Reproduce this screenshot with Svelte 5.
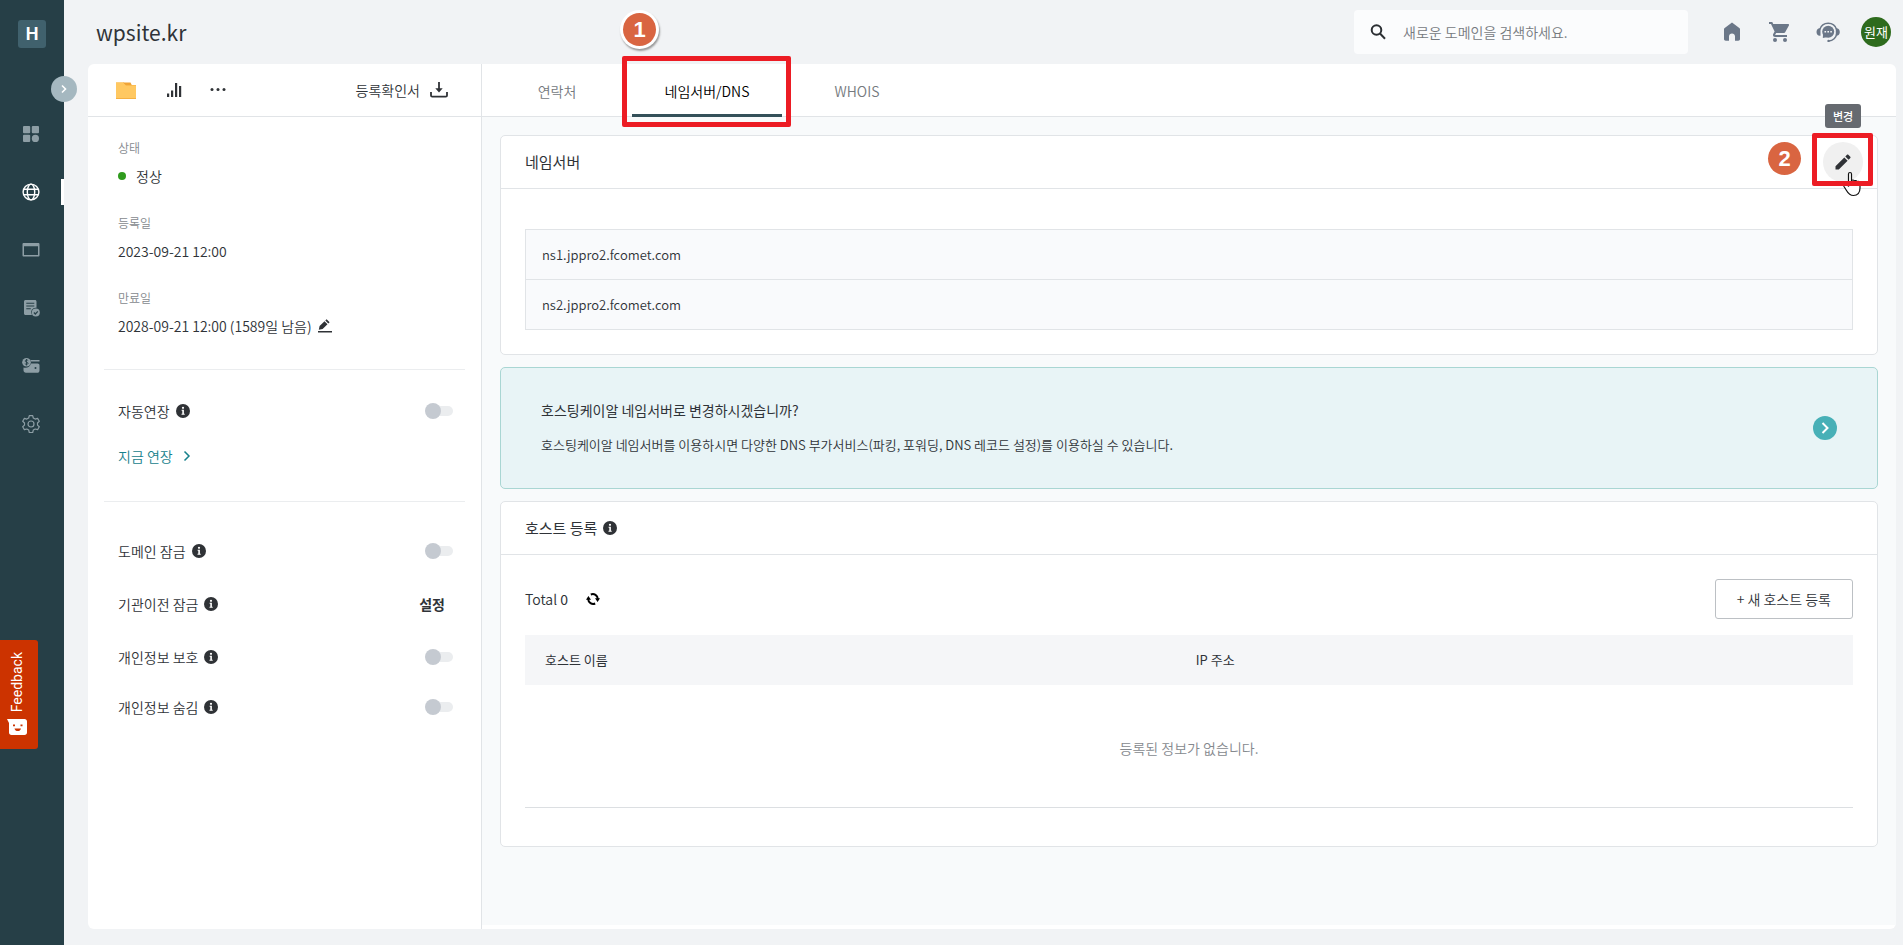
<script lang="ts">
  interface Option {
    id: string;
    label: string;
    /** true면 토글 대신 설정 버튼 표시 */
    setting?: boolean;
  }

  /** 사이드바 메뉴 */
  const menus = [
    { id: 'dashboard', label: '대시보드' },
    { id: 'domain', label: '도메인' },
    { id: 'hosting', label: '호스팅' },
    { id: 'ssl', label: '인증서' },
    { id: 'billing', label: '결제' },
    { id: 'settings', label: '환경설정' }
  ];

  const tabs = ['연락처', '네임서버/DNS', 'WHOIS'];

  const options: Option[] = [
    { id: 'lock', label: '도메인 잠금' },
    { id: 'transfer', label: '기관이전 잠금', setting: true },
    { id: 'privacy', label: '개인정보 보호' },
    { id: 'hide', label: '개인정보 숨김' }
  ];

  const nameservers = ['ns1.jppro2.fcomet.com', 'ns2.jppro2.fcomet.com'];

  let activeMenu = $state('domain');
  let activeTab = $state('네임서버/DNS');
  let keyword = $state('');
</script>

{#snippet info()}
  <svg class="info" viewBox="0 0 14 14" aria-hidden="true">
    <circle cx="7" cy="7" r="7" fill="#2f3236" />
    <circle cx="7" cy="3.8" r="1.1" fill="#fff" />
    <path d="M5.6 5.8h2.3v4h.8v1H5.5v-1h.8V6.8h-.7z" fill="#fff" />
  </svg>
{/snippet}

{#snippet menuIcon(id: string)}
  <svg width="20" height="20" viewBox="0 0 20 20" fill="currentColor" aria-hidden="true">
    {#if id === 'dashboard'}
      <rect x="2" y="2" width="7.2" height="7.2" rx="1" />
      <rect x="10.8" y="2" width="7.2" height="7.2" rx="1" />
      <rect x="2" y="10.8" width="7.2" height="7.2" rx="1" />
      <circle cx="14.4" cy="14.4" r="3.6" />
    {:else if id === 'domain'}
      <g fill="none" stroke="currentColor" stroke-width="1.4">
        <circle cx="10" cy="10" r="7.9" />
        <ellipse cx="10" cy="10" rx="3.7" ry="7.9" />
        <path d="M2.7 7.2h14.6M2.7 12.8h14.6" />
      </g>
    {:else if id === 'hosting'}
      <path d="M2.6 3h14.8c.6 0 1.1.5 1.1 1.1v11.3c0 .6-.5 1.1-1.1 1.1H2.6c-.6 0-1.1-.5-1.1-1.1V4.1C1.5 3.5 2 3 2.600 3zM3 6.200V15h14V6.200z" fill-rule="evenodd" />
    {:else if id === 'ssl'}
      <path d="M4.5 2H14c.8 0 1.5.7 1.5 1.5v6.200a4.700 4.700 0 0 0-4.600 7.300H4.500C3.700 17 3 16.300 3 15.500v-12C3 2.700 3.700 2 4.500 2z" />
      <path d="M5.300 5.300h8M5.300 8h8M5.300 10.700h4.500" stroke="#263f47" stroke-width="1.1" />
      <circle cx="14.8" cy="14.5" r="4" />
      <path d="M12.900 14.500l1.400 1.500 2.500-2.700" fill="none" stroke="#263f47" stroke-width="1.2" />
    {:else if id === 'billing'}
      <path d="M9.500 5.500h9V4h-9zM2.500 11.500c3.500.8 6.500-.6 7.500-4h6.700c1 0 1.800.8 1.800 1.800v5.200c0 1.400-1 2.300-2.300 2.300H5c-1.500 0-2.500-1-2.500-2.500z" />
      <circle cx="5.5" cy="6.2" r="4.3" />
      <path d="M7.200 4.600c-.8-1-3.200-.8-3.100.5.1 1.400 3 .7 3 2.100 0 1.400-2.400 1.500-3.300.4M5.500 3v6.500" fill="none" stroke="#263f47" stroke-width=".9" />
      <circle cx="14.5" cy="12" r="1" fill="#263f47" />
    {:else}
      <g fill="none" stroke="currentColor" stroke-width="1.2" stroke-linejoin="round">
        <circle cx="10" cy="10" r="3" />
        <path d="M8.300 1.600h3.400l.6 2.400 1.900 1.100 2.400-.7 1.700 2.900-1.800 1.700v2.100l1.800 1.700-1.700 2.900-2.400-.7-1.900 1.100-.6 2.400H8.300l-.6-2.400-1.900-1.100-2.400.7-1.700-2.900 1.800-1.700V9L1.700 7.300l1.700-2.900 2.400.7L7.700 4z" />
      </g>
    {/if}
  </svg>
{/snippet}

<div class="app">
  <aside class="sidebar">
    <a class="logo" href="#home" aria-label="홈">H</a>
    <button class="expand" aria-label="메뉴 펼치기">
      <svg width="12" height="12" viewBox="0 0 12 12" fill="none" stroke="#fff" stroke-width="1.6">
        <path d="M4 2.500L7.500 6 4 9.500" />
      </svg>
    </button>
    <nav class="menu">
      {#each menus as menu}
        <button
          class="menu-item"
          class:active={activeMenu === menu.id}
          aria-label={menu.label}
          onclick={() => (activeMenu = menu.id)}
        >
          {@render menuIcon(menu.id)}
        </button>
      {/each}
    </nav>
  </aside>

  <button class="feedback">
    <span>Feedback</span>
    <svg width="20" height="16" viewBox="0 0 20 16" aria-hidden="true">
      <path d="M0 0h17.500C19 0 20 1 20 2.500v11c0 1.500-1 2.500-2.500 2.500h-13C3 16 2 15 2 13.500V4z" fill="#fff" />
      <path d="M6 5.500h2v1.700H6zM13.500 5.500h2v1.700h-2zM7.500 9.500h6.500c-.5 3.400-6 3.400-6.500 0z" fill="#cc3300" />
    </svg>
  </button>

  <main class="main">
    <header class="header">
      <h1>wpsite.kr</h1>
      <div class="header-tools">
        <label class="search">
          <svg width="18" height="18" viewBox="0 0 18 18" fill="none" stroke="#2b2f33" stroke-width="2" aria-hidden="true">
            <circle cx="6.5" cy="7" r="4.8" />
            <path d="M10 10.500l5 5.200" />
          </svg>
          <input type="text" aria-label="도메인 검색" placeholder="새로운 도메인을 검색하세요." bind:value={keyword} />
        </label>
        <button class="tool" aria-label="홈">
          <svg width="24" height="24" viewBox="0 0 24 24" fill="currentColor">
            <path d="M12 2.500l7.300 5.400c.5.400.7.800.7 1.400v9.700c0 1-.8 1.700-1.700 1.700H15v-4.400c0-1.600-1.300-2.800-3-2.800s-3 1.200-3 2.800v4.400H5.700C4.800 20.700 4 20 4 19V9.300c0-.6.200-1 .7-1.400z" />
          </svg>
        </button>
        <button class="tool" aria-label="장바구니">
          <svg width="24" height="24" viewBox="0 0 24 24" fill="currentColor">
            <path d="M2 2v2h2l3.600 7.600-1.400 2.500c-.7 1.300.3 2.900 1.800 2.900h12v-2H8.400c-.1 0-.2-.1-.2-.3l.9-1.700h7.500c.7 0 1.400-.4 1.700-1l3.600-6.500c.4-.7-.1-1.500-.9-1.500H6.200L5.300 2z" />
            <circle cx="8" cy="20" r="2" />
            <circle cx="18" cy="20" r="2" />
          </svg>
        </button>
        <button class="tool" aria-label="고객지원">
          <svg width="24" height="24" viewBox="-2 0 24 24" overflow="visible" fill="currentColor">
            <path d="M3.800 9.500a8.800 8.800 0 0 1 16.800 0M20.800 13.500a8.800 8.800 0 0 1-8 7.600" fill="none" stroke="currentColor" stroke-width="1.5" />
            <path d="M4.500 8.200v7.600C2.200 16.200.5 14.600.5 12s1.700-4.200 4-3.800zM19.800 8.200v7.600c2.300.4 4-1.200 4-3.800s-1.700-4.200-4-3.800z" />
            <circle cx="12.2" cy="11.8" r="6" />
            <path d="M6.800 18l.3-5 4.500 4z" />
            <path d="M8.500 11h1.600v1.600H8.500zM11.400 11H13v1.600h-1.600zM14.300 11h1.600v1.600h-1.600z" fill="#f1f3f5" />
            <circle cx="12.5" cy="20.9" r="1.2" />
          </svg>
        </button>
        <button class="avatar">원재</button>
      </div>
    </header>

    <div class="panel">
      <section class="detail">
        <div class="toolbar">
          <button aria-label="폴더">
            <svg width="20" height="20" viewBox="0 0 20 20">
              <path d="M0 2.500h8l1.500 2.500H20v14H0z" fill="#f5b042" />
              <path d="M7 2.500h7.500L16 5.500H9z" fill="#f0a437" />
              <path d="M0 2.500h7l3 3h10V18H0z" fill="#ffc861" />
            </svg>
          </button>
          <button aria-label="통계">
            <svg width="20" height="20" viewBox="0 0 20 20" fill="#2f3236">
              <path d="M5 13.500h2.200V17H5zM9 10.500h2.200V17H9zM13 3h2.200v14H13zM17 6h2.200v11H17z" />
            </svg>
          </button>
          <button aria-label="더보기">
            <svg width="20" height="20" viewBox="0 0 20 20" fill="#2f3236">
              <circle cx="4" cy="9.5" r="1.5" /><circle cx="10" cy="9.5" r="1.5" /><circle cx="16" cy="9.5" r="1.5" />
            </svg>
          </button>
          <button class="download">
            등록확인서
            <svg width="18" height="18" viewBox="0 0 18 18" fill="none" stroke="#2f3236" stroke-width="1.8" aria-hidden="true">
              <path d="M1 11v3.500c0 .8.500 1.200 1.200 1.200h13.600c.7 0 1.200-.4 1.200-1.200V11" />
              <path d="M9 1v8" />
              <path d="M5.300 7.200h7.400L9 11.500z" fill="#2f3236" stroke="none" />
            </svg>
          </button>
        </div>

        <div class="detail-body">
          <dl class="summary">
            <dt>상태</dt>
            <dd class="status">정상</dd>
            <dt>등록일</dt>
            <dd>2023-09-21 12:00</dd>
            <dt>만료일</dt>
            <dd>
              2028-09-21 12:00 (1589일 남음)
              <button aria-label="만료일 변경">
                <svg width="14" height="14" viewBox="0 0 14 14" fill="#2f3236">
                  <path d="M0 12h14v1.600H0zM.8 10.800l.8-3.700 4.900-4.900 3 3-4.900 4.900zM7.300 1.500L8.600.2l3 3-1.300 1.300z" />
                </svg>
              </button>
            </dd>
          </dl>

          <div class="renew">
            <div class="row">
              <label for="auto-renew">자동연장 {@render info()}</label>
              <input id="auto-renew" class="toggle" type="checkbox" />
            </div>
            <a class="row renew-link" href="#renew">
              지금 연장
              <svg width="8" height="12" viewBox="0 0 8 12" fill="none" stroke="currentColor" stroke-width="1.5" aria-hidden="true">
                <path d="M1.500 1.500L6 6l-4.500 4.500" />
              </svg>
            </a>
          </div>

          <div class="options">
            {#each options as option}
              {#if option.setting}
                <div class="row row-setting">
                  <span class="row-label">{option.label} {@render info()}</span>
                  <button class="setting">설정</button>
                </div>
              {:else}
                <div class="row">
                  <label for={option.id}>{option.label} {@render info()}</label>
                  <input id={option.id} class="toggle" type="checkbox" />
                </div>
              {/if}
            {/each}
          </div>
        </div>
      </section>

      <section class="content">
        <div class="tabs" role="tablist">
          {#each tabs as tab}
            <button
              class="tab"
              class:active={activeTab === tab}
              role="tab"
              aria-selected={activeTab === tab}
              onclick={() => (activeTab = tab)}
            >
              {tab}
              {#if tab === '네임서버/DNS'}
                <span class="mark mark-tab"></span>
                <span class="step step-tab">1</span>
              {/if}
            </button>
          {/each}
        </div>

        <div class="cards">
          <article class="card">
            <div class="card-head">
              <h2>네임서버</h2>
              <div class="edit-wrap">
                <span class="tooltip" role="tooltip">변경</span>
                <button class="edit" aria-label="네임서버 변경">
                  <svg width="20" height="20" viewBox="0 0 20 20" fill="#2f3236">
                    <path d="M2.500 17.500v-3.300l8.800-8.800 3.300 3.300-8.800 8.800zM12.300 4.400l1.700-1.700c.4-.4.900-.4 1.300 0l2 2c.4.400.4.900 0 1.300l-1.700 1.700z" />
                  </svg>
                </button>
                <svg class="cursor" width="19" height="26" viewBox="0 0 19 26" aria-hidden="true">
                  <path
                    d="M5.500 15V3c0-2 3-2 3 0v7c.3-1.500 2.800-1.300 2.900.4.500-1.300 2.700-1 2.800.6.700-1 2.800-.6 2.800 1.200V17c0 5-2.500 7.500-6.500 7.500-3.500 0-5-1.500-7-5L1 15.500c-.8-1.800 1-2.800 2.300-1.700z"
                    fill="#fff" stroke="#111" stroke-width="1.2"
                  />
                  <path d="M8.500 10v4M11.400 10.500V14M14.200 11.500V14" fill="none" stroke="#111" />
                </svg>
                <span class="mark mark-edit"></span>
                <span class="step step-edit">2</span>
              </div>
            </div>
            <ul class="nameservers">
              {#each nameservers as ns}
                <li>{ns}</li>
              {/each}
            </ul>
          </article>

          <a class="banner" href="#change">
            <span class="banner-text">
              <strong>호스팅케이알 네임서버로 변경하시겠습니까?</strong>
              <span>호스팅케이알 네임서버를 이용하시면 다양한 DNS 부가서비스(파킹, 포워딩, DNS 레코드 설정)를 이용하실 수 있습니다.</span>
            </span>
            <svg width="24" height="24" viewBox="0 0 24 24" aria-hidden="true">
              <circle cx="12" cy="12" r="12" fill="#48b0b7" />
              <path d="M9.500 7l5 5-5 5" fill="none" stroke="#fff" stroke-width="2" />
            </svg>
          </a>

          <article class="card">
            <div class="card-head">
              <h2>호스트 등록 {@render info()}</h2>
            </div>
            <div class="hosts">
              <div class="hosts-bar">
                <span class="total">Total <b>0</b></span>
                <button class="refresh" aria-label="새로고침">
                  <svg width="14" height="14" viewBox="0 0 14 14" fill="none" stroke="#000" stroke-width="2">
                    <path d="M4.800 2.500A5 5 0 0 1 11.800 7M9.200 11.500A5 5 0 0 1 2.200 7" />
                    <path d="M9 6.300h5L11.600 10zM0 7.700h5L2.400 4z" fill="#000" stroke="none" />
                  </svg>
                </button>
                <button class="add">+ 새 호스트 등록</button>
              </div>
              <table>
                <thead>
                  <tr><th class="col-host">호스트 이름</th><th>IP 주소</th></tr>
                </thead>
                <tbody>
                  <tr><td colspan="2">등록된 정보가 없습니다.</td></tr>
                </tbody>
              </table>
            </div>
          </article>
        </div>
      </section>
    </div>
  </main>
</div>

<style>
  :global(body) {
    background: #f1f3f5;
  }

  .app,
  .app * {
    box-sizing: border-box;
  }

  .app {
    --line: #e1e4e7;
    --text: #2f3338;
    display: flex;
    min-height: 100vh;
    font-family: 'Noto Sans CJK KR', 'Noto Sans', sans-serif;
    font-size: 14px;
    font-weight: 350;
    line-height: 20px;
    color: var(--text);
  }

  button {
    padding: 0;
    border: none;
    background: none;
    font: inherit;
    color: inherit;
    cursor: pointer;
  }

  a {
    color: inherit;
    text-decoration: none;
  }

  h1,
  h2,
  dl,
  dd,
  ul {
    margin: 0;
    padding: 0;
  }

  h1,
  h2 {
    font-weight: 400;
  }

  svg {
    display: block;
    flex: none;
  }

  /* 사이드바 */
  .sidebar {
    position: relative;
    display: flex;
    flex: none;
    flex-direction: column;
    gap: 73px;
    width: 64px;
    padding-top: 20px;
    background: #263f47;
  }

  .logo {
    display: flex;
    align-items: center;
    justify-content: center;
    width: 28px;
    height: 28px;
    margin-left: 18px;
    border-radius: 3px;
    background: #40616d;
    color: #fff;
    font-family: Inter, sans-serif;
    font-size: 17px;
    font-weight: 700;
  }

  .expand {
    position: absolute;
    top: 76px;
    right: -13px;
    display: flex;
    align-items: center;
    justify-content: center;
    width: 26px;
    height: 26px;
    border-radius: 50%;
    background: #a5b8c0;
  }

  .menu {
    display: flex;
    flex-direction: column;
    gap: 32px;
  }

  .menu-item {
    display: flex;
    align-items: center;
    height: 26px;
    padding-left: 21px;
    border-right: 3px solid transparent;
    color: #8d9ea5;
  }

  .menu-item.active {
    border-right-color: #fff;
    color: #fff;
  }

  .feedback {
    position: fixed;
    top: 640px;
    left: 0;
    display: flex;
    flex-direction: column;
    align-items: center;
    justify-content: space-between;
    width: 38px;
    height: 109px;
    padding: 12px 11px 14px 7px;
    border-radius: 0 3px 3px 0;
    background: #cc3300;
    color: #fff;
    font-family: Roboto, sans-serif;
    font-weight: 400;
  }

  .feedback span {
    writing-mode: vertical-rl;
    transform: rotate(180deg);
  }

  /* 헤더 */
  .main {
    display: flex;
    flex: 1;
    flex-direction: column;
    min-width: 0;
    padding: 0 7px 16px 24px;
  }

  .header {
    display: flex;
    align-items: center;
    justify-content: space-between;
    height: 64px;
    padding: 0 5px 0 8px;
  }

  h1 {
    font-size: 21px;
    line-height: 32px;
  }

  .header-tools {
    display: flex;
    align-items: center;
    gap: 23px;
  }

  .search {
    display: flex;
    align-items: center;
    gap: 15px;
    width: 334px;
    height: 44px;
    margin-right: 9px;
    padding: 0 16px;
    border-radius: 4px;
    background: #fbfcfd;
  }

  .search input {
    flex: 1;
    min-width: 0;
    padding: 0;
    border: none;
    outline: none;
    background: none;
    font: inherit;
  }

  .search input::placeholder {
    color: #75797e;
  }

  .tool {
    color: #6b7788;
  }

  .tool svg {
    overflow: visible;
  }

  .avatar {
    width: 30px;
    height: 30px;
    border-radius: 50%;
    background: #2e6b1d;
    color: #fff;
    font-size: 13px;
    font-weight: 400;
  }

  /* 도메인 상세 */
  .panel {
    display: grid;
    flex: 1;
    grid-template-columns: 394px 1fr;
    border-radius: 6px;
    background: #fff;
  }

  .detail {
    border-right: 1px solid var(--line);
  }

  .toolbar {
    display: flex;
    align-items: center;
    gap: 26px;
    height: 53px;
    padding: 0 33px 0 28px;
    border-bottom: 1px solid var(--line);
  }

  .download {
    display: flex;
    align-items: center;
    gap: 10px;
    margin-left: auto;
  }

  .detail-body {
    padding: 0 16px;
  }

  .summary,
  .renew,
  .options {
    padding: 0 12px 0 14px;
  }

  .summary {
    padding-top: 22px;
    padding-bottom: 33px;
  }

  dt {
    margin-bottom: 9px;
    font-size: 12px;
    line-height: 18px;
    color: #85898e;
  }

  dd {
    display: flex;
    align-items: center;
    gap: 6px;
  }

  dd:not(:last-child) {
    margin-bottom: 28px;
  }

  .status::before {
    width: 8px;
    height: 8px;
    margin-right: 4px;
    border-radius: 50%;
    background: #2f9b1d;
    content: '';
  }

  .renew,
  .options {
    display: flex;
    flex-direction: column;
    border-top: 1px solid #ebedef;
  }

  .renew {
    gap: 11px;
    padding-top: 24px;
    padding-bottom: 28px;
  }

  .options {
    gap: 16px;
    padding-top: 32px;
  }

  .row {
    display: flex;
    align-items: center;
    justify-content: space-between;
    min-height: 34px;
  }

  .row-setting {
    min-height: 40px;
  }

  .row label,
  .row-label,
  h2 {
    display: flex;
    align-items: center;
    gap: 6px;
  }

  .info {
    width: 14px;
    height: 14px;
  }

  .renew-link {
    justify-content: flex-start;
    gap: 10px;
    color: #17818c;
  }

  .setting {
    padding: 0 8px;
    font-weight: 700;
  }

  .toggle {
    position: relative;
    width: 28px;
    height: 16px;
    margin: 0;
    appearance: none;
    cursor: pointer;
  }

  .toggle::before,
  .toggle::after {
    position: absolute;
    content: '';
  }

  .toggle::before {
    inset: 3px 0 3px 8px;
    border-radius: 5px;
    background: #ebedef;
  }

  .toggle::after {
    top: 0;
    left: 0;
    width: 16px;
    height: 16px;
    border-radius: 50%;
    background: #c5cad1;
  }

  .toggle:checked::after {
    left: 12px;
    background: #48b0b7;
  }

  /* 탭 */
  .content {
    display: flex;
    flex-direction: column;
    min-width: 0;
    padding-bottom: 4px;
  }

  .tabs {
    display: flex;
    height: 53px;
    border-bottom: 1px solid var(--line);
  }

  .tab {
    position: relative;
    width: 150px;
    height: 53px;
    border-top: 3px solid transparent;
    border-bottom: 3px solid transparent;
    color: #75797e;
  }

  .tab.active {
    border-bottom-color: #345059;
    color: #000;
  }

  .cards {
    display: flex;
    flex: 1;
    flex-direction: column;
    gap: 12px;
    padding: 18px;
    background: #f8fafb;
  }

  .card {
    border: 1px solid var(--line);
    border-radius: 5px;
    background: #fff;
  }

  .card-head {
    display: flex;
    align-items: center;
    justify-content: space-between;
    height: 53px;
    padding: 0 14px 0 24px;
    border-bottom: 1px solid var(--line);
  }

  h2 {
    font-size: 15px;
  }

  .edit-wrap {
    position: relative;
  }

  .edit {
    display: flex;
    align-items: center;
    justify-content: center;
    width: 40px;
    height: 40px;
    border-radius: 50%;
    background: #f0f0f0;
  }

  .tooltip {
    position: absolute;
    bottom: 54px;
    left: 2px;
    width: 36px;
    border-radius: 3px;
    background: #666a70;
    color: #fff;
    font-size: 11px;
    font-weight: 500;
    line-height: 24px;
    text-align: center;
  }

  .cursor {
    position: absolute;
    top: 29px;
    left: 20px;
    pointer-events: none;
  }

  /* 안내 표시 */
  .mark {
    position: absolute;
    border: 5px solid #ec1c24;
    border-radius: 2px;
    pointer-events: none;
  }

  .mark-tab {
    inset: -11px -9px -13px -10px;
  }

  .mark-edit {
    inset: -9px -10px -4px -11px;
  }

  .step {
    position: absolute;
    width: 33px;
    height: 33px;
    border-radius: 50%;
    background: #d96541;
    color: #fff;
    font-family: 'Liberation Sans', sans-serif;
    font-size: 22px;
    font-weight: 700;
    line-height: 33px;
    text-align: center;
  }

  .step-tab {
    top: -54px;
    left: -9px;
    box-shadow: 0 0 0 3px #fff, 1px 2px 2px 3px #999;
  }

  .step-edit {
    top: 0;
    right: 62px;
  }

  .nameservers {
    margin: 40px 24px 24px;
    border: 1px solid var(--line);
    background: #f9fafc;
    list-style: none;
    font-size: 13px;
  }

  .nameservers li {
    padding: 15px 16px 14px;
  }

  .nameservers li + li {
    border-top: 1px solid var(--line);
  }

  .banner {
    display: flex;
    align-items: center;
    justify-content: space-between;
    padding: 32px 40px 33px;
    border: 1px solid #a9d6d3;
    border-radius: 5px;
    background: #e8f4f6;
  }

  .banner-text {
    display: flex;
    flex-direction: column;
    gap: 15px;
    font-size: 13px;
  }

  .banner strong {
    font-size: 14px;
    font-weight: 400;
  }

  .hosts {
    padding: 24px 24px 38px;
  }

  .hosts-bar {
    display: flex;
    align-items: center;
    margin-bottom: 16px;
  }

  .total b {
    font-weight: 400;
  }

  .refresh {
    margin-left: 18px;
  }

  .add {
    height: 40px;
    margin-left: auto;
    padding: 0 21px;
    border: 1px solid #bcc0c4;
    border-radius: 3px;
  }

  table {
    width: 100%;
    border-collapse: collapse;
    table-layout: fixed;
  }

  th {
    height: 50px;
    padding: 0 20px;
    background: #f5f6f8;
    font-size: 13px;
    font-weight: 400;
    text-align: left;
  }

  .col-host {
    width: 49%;
  }

  td {
    height: 122px;
    padding: 4px 0 0;
    border-bottom: 1px solid #dcdfe2;
    color: #85898e;
    text-align: center;
  }
</style>
